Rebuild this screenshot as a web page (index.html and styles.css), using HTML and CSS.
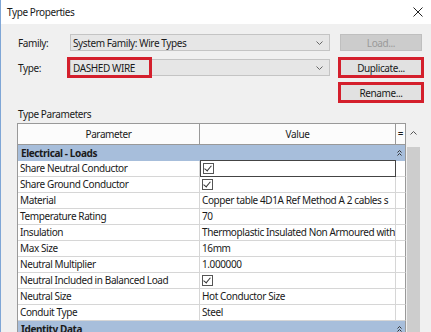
FILE: index.html
```html
<!DOCTYPE html>
<html lang="en">
<head>
    <meta charset="UTF-8">
    <title>Type Properties</title>
    <link rel="stylesheet" href="styles.css">
</head>
<body>
<div class="dialog">
    <div class="titlebar">
        <span class="title">Type Properties</span>
        <svg class="close" width="10" height="10" viewBox="0 0 10 10">
            <path d="M0.5 0.5 L9.5 9.5 M9.5 0.5 L0.5 9.5" stroke="#222" stroke-width="1" fill="none"/>
        </svg>
    </div>

    <div class="dialog-body">
        <div class="form">
            <label class="form-label">Family:</label>
            <div class="combo">
                <span class="combo-text">System Family: Wire Types</span>
                <svg class="combo-arrow" width="7" height="4" viewBox="0 0 7 4"><path d="M0.5 0.5 L3.5 3.5 L6.5 0.5" stroke="#666" fill="none"/></svg>
            </div>
            <button class="btn" disabled>Load...</button>

            <label class="form-label">Type:</label>
            <div class="combo">
                <span class="combo-text">DASHED WIRE</span>
                <span class="mark"></span>
                <svg class="combo-arrow" width="7" height="4" viewBox="0 0 7 4"><path d="M0.5 0.5 L3.5 3.5 L6.5 0.5" stroke="#666" fill="none"/></svg>
            </div>
            <button class="btn btn-marked">Duplicate...</button>

            <button class="btn btn-marked btn-rename">Rename...</button>
        </div>

        <div class="section-label">Type Parameters</div>

        <div class="props-wrap">
            <div class="props">
                <div class="props-head">Parameter</div>
                <div class="props-head">Value</div>
                <div class="props-head props-eq">=</div>

                <div class="props-group">
                    <span>Electrical - Loads</span>
                    <svg class="collapse" width="5" height="6" viewBox="0 0 5 6"><path d="M0.5 2.5 L2.5 0.5 L4.5 2.5 M0.5 5.5 L2.5 3.5 L4.5 5.5" stroke="#333" fill="none"/></svg>
                </div>

                <div class="cell">Share Neutral Conductor</div>
                <div class="cell cell-selected"><span class="check"></span></div>
                <div class="cell"></div>

                <div class="cell">Share Ground Conductor</div>
                <div class="cell"><span class="check"></span></div>
                <div class="cell"></div>

                <div class="cell">Material</div>
                <div class="cell">Copper table 4D1A Ref Method A 2 cables s</div>
                <div class="cell"></div>

                <div class="cell">Temperature Rating</div>
                <div class="cell">70</div>
                <div class="cell"></div>

                <div class="cell">Insulation</div>
                <div class="cell">Thermoplastic Insulated Non Armoured with</div>
                <div class="cell"></div>

                <div class="cell">Max Size</div>
                <div class="cell">16mm</div>
                <div class="cell"></div>

                <div class="cell">Neutral Multiplier</div>
                <div class="cell">1.000000</div>
                <div class="cell"></div>

                <div class="cell">Neutral Included in Balanced Load</div>
                <div class="cell"><span class="check"></span></div>
                <div class="cell"></div>

                <div class="cell">Neutral Size</div>
                <div class="cell">Hot Conductor Size</div>
                <div class="cell"></div>

                <div class="cell">Conduit Type</div>
                <div class="cell">Steel</div>
                <div class="cell"></div>

                <div class="props-group">
                    <span>Identity Data</span>
                    <svg class="collapse" width="5" height="6" viewBox="0 0 5 6"><path d="M0.5 2.5 L2.5 0.5 L4.5 2.5 M0.5 5.5 L2.5 3.5 L4.5 5.5" stroke="#333" fill="none"/></svg>
                </div>
            </div>

            <div class="scrollbar">
                <div class="scroll-up">
                    <svg width="7" height="4" viewBox="0 0 7 4"><path d="M0.5 3.5 L3.5 0.5 L6.5 3.5" stroke="#555" fill="none"/></svg>
                </div>
                <div class="scroll-thumb"></div>
            </div>
        </div>
    </div>
</div>
</body>
</html>
```

FILE: styles.css
```css
html, body {
    margin: 0;
    padding: 0;
}
body {
    width: 431px;
    height: 332px;
    overflow: hidden;
    font-family: "Noto Sans", "Open Sans", sans-serif;
    font-size: 10px;
    letter-spacing: -0.4px;
    color: #1a1a1a;
}

.dialog {
    height: 332px;
    border-left: 1px solid #7fa6d6;
    background-color: #f0f0f0;
}

.titlebar {
    height: 24px;
    background-color: #fff;
    display: flex;
    align-items: center;
    justify-content: space-between;
    padding: 0 8px 0 6px;
}
.title {
    padding-bottom: 1px;
}

.dialog-body {
    padding-top: 10px;
}

/* family / type block */
.form {
    display: grid;
    grid-template-columns: 43px 260px 82px;
    grid-auto-rows: 17px;
    column-gap: 10px;
    row-gap: 8px;
    padding-left: 16px;
    align-items: center;
}
.form-label {
    padding-left: 1px;
}
.combo {
    position: relative;
    height: 17px;
    box-sizing: border-box;
    border: 1px solid #c4c4c4;
    background-color: #e6e6e6;
    display: flex;
    align-items: center;
    justify-content: space-between;
    padding: 0 6px 0 2px;
}
.combo-text {
    white-space: nowrap;
}
.mark {
    position: absolute;
    left: -4px;
    top: -3px;
    width: 85px;
    height: 21px;
    box-sizing: border-box;
    border: 3px solid #d41f2c;
}
.btn {
    height: 17px;
    box-sizing: border-box;
    border: 1px solid #adadad;
    background-color: #e1e1e1;
    font-family: inherit;
    font-size: 10px;
    letter-spacing: -0.4px;
    color: #1a1a1a;
    padding: 0;
}
.btn:disabled {
    background-color: #cccccc;
    border-color: #bfbfbf;
    color: #9a9a9a;
}
.btn-marked {
    outline: 3px solid #d41f2c;
    outline-offset: -1px;
}
.btn-rename {
    grid-column: 3;
}

.section-label {
    margin: 5px 0 0 17px;
    height: 17px;
    line-height: 17px;
}

/* parameter grid */
.props-wrap {
    display: flex;
    margin-left: 16px;
}
.props {
    display: grid;
    grid-template-columns: 182px 196px 10px;
    grid-template-rows: 21px;
    grid-auto-rows: 16px;
    border-left: 1px solid #999;
    border-top: 1px solid #999;
    background-color: #fff;
}
.props-head {
    height: 21px;
    box-sizing: border-box;
    border-right: 1px solid #999;
    border-bottom: 1px solid #999;
    text-align: center;
    line-height: 20px;
    background-color: #fcfcfc;
}
.props-eq {
    line-height: 18px;
}
.props-group {
    grid-column: 1 / 4;
    background-color: #a7bedb;
    display: flex;
    align-items: center;
    justify-content: space-between;
    padding: 0 3px 0 3px;
    font-weight: bold;
    border-right: 1px solid #999;
}
.collapse {
    margin-bottom: 1px;
}
.cell {
    box-sizing: border-box;
    border-right: 1px solid #d6d6d6;
    border-bottom: 1px solid #d6d6d6;
    padding-left: 2px;
    line-height: 15px;
    white-space: nowrap;
    overflow: hidden;
    display: flex;
    align-items: center;
}
.cell:nth-child(3n+1) {
    border-right-color: #999;
}
.cell-selected {
    border: 1px solid #444;
    margin-top: -1px;
    height: 17px;
}
.check {
    width: 11px;
    height: 11px;
    box-sizing: border-box;
    border: 1px solid #555;
    background-color: #fff;
    position: relative;
}
.check::after {
    content: "";
    position: absolute;
    left: 2px;
    top: 0px;
    width: 3px;
    height: 6px;
    border-right: 1px solid #333;
    border-bottom: 1px solid #333;
    transform: rotate(40deg);
}

.scrollbar {
    width: 15px;
    display: flex;
    flex-direction: column;
    align-items: center;
    background-color: #f0f0f0;
}
.scroll-up {
    height: 24px;
    display: flex;
    align-items: center;
    justify-content: center;
    padding-bottom: 4px;
    box-sizing: border-box;
}
.scroll-thumb {
    width: 13px;
    flex: 1;
    background-color: #cdcdcd;
}
```
